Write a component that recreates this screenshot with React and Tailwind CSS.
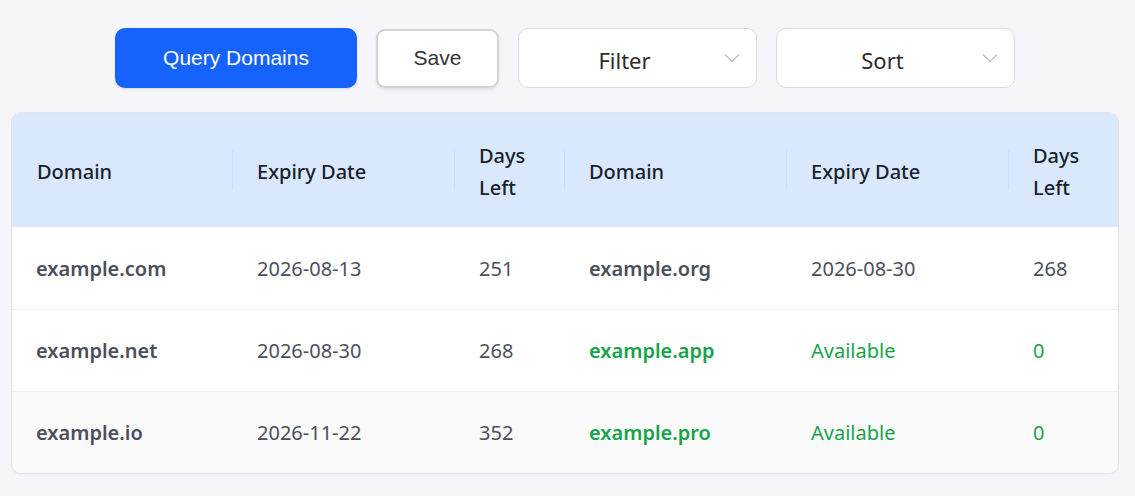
import React from 'react';

const rows = [
  { d1: 'example.com', e1: '2026-08-13', n1: '251', d2: 'example.org', e2: '2026-08-30', n2: '268', ok2: false },
  { d1: 'example.net', e1: '2026-08-30', n1: '268', d2: 'example.app', e2: 'Available', n2: '0', ok2: true },
  { d1: 'example.io', e1: '2026-11-22', n1: '352', d2: 'example.pro', e2: 'Available', n2: '0', ok2: true },
];

const Chevron = () => (
  <svg width="16" height="10" viewBox="0 0 16 10" fill="none" className="absolute right-[16px] top-[24px]">
    <path d="M1 1.5l7 7 7-7" stroke="#b8b8bd" strokeWidth="1.1" />
  </svg>
);

const HeadCell = ({ children, sep = true, w }) => (
  <th className={`relative ${w} text-left font-medium px-[25px] pt-[27px] pb-[23px] leading-[32px]`}>
    {sep && <span className="absolute left-0 top-[37px] h-[40px] w-px bg-[#cfdff5]" />}
    {children}
  </th>
);

export default function App() {
  return (
    <div className="min-h-screen w-full bg-[#f6f5f9] pt-[28px]" style={{ fontFamily: '"Noto Sans", sans-serif' }}>
      <div className="flex items-center gap-[19px] pl-[115px]" style={{ fontFamily: '"Liberation Sans", Arial, sans-serif' }}>
        <button className="w-[242px] h-[60px] rounded-[10px] bg-[#1662fd] text-white text-[21px] shadow-sm">
          Query Domains
        </button>
        <button className="w-[123px] h-[59px] rounded-[9px] bg-white border-2 border-[#d4d4d8] text-[#333] text-[21px] shadow-[0_2px_3px_rgba(0,0,0,0.08)]">
          Save
        </button>
        <div className="relative w-[239px] h-[60px] rounded-[10px] bg-white border border-[#dcdce0] flex items-center justify-center pr-[26px] pt-[4px] text-[22px] text-[#2b2b2b]" style={{ fontFamily: '"Noto Sans", sans-serif' }}>
          Filter
          <Chevron />
        </div>
        <div className="relative w-[239px] h-[60px] rounded-[10px] bg-white border border-[#dcdce0] flex items-center justify-center pr-[26px] pt-[4px] text-[22px] text-[#2b2b2b]" style={{ fontFamily: '"Noto Sans", sans-serif' }}>
          Sort
          <Chevron />
        </div>
      </div>

      <div className="mx-[11px] mt-[24px] w-[1108px] rounded-[10px] border border-[#e3e3e7] bg-white overflow-hidden shadow-[0_1px_2px_rgba(0,0,0,0.04)]">
        <table className="w-full border-collapse table-fixed text-[20px]">
          <thead>
            <tr className="bg-[#d9e8fd] text-[#1a1f2b] h-[114px]">
              <HeadCell sep={false} w="w-[220px]">Domain</HeadCell>
              <HeadCell w="w-[222px]">Expiry Date</HeadCell>
              <HeadCell w="w-[110px]">Days Left</HeadCell>
              <HeadCell w="w-[222px]">Domain</HeadCell>
              <HeadCell w="w-[222px]">Expiry Date</HeadCell>
              <HeadCell w="w-[112px]">Days Left</HeadCell>
            </tr>
          </thead>
          <tbody>
            {rows.map((r, i) => (
              <tr key={i} className={`h-[82px] ${i > 0 ? 'border-t border-[#efeff1]' : ''} ${i === 2 ? 'bg-[#fafafa]' : 'bg-white'}`}>
                <td className="pl-[24px] pt-[2px] font-semibold text-[#4b4f5c]">{r.d1}</td>
                <td className="pl-[25px] pt-[2px] text-[#4b4f5c]">{r.e1}</td>
                <td className="pl-[25px] pt-[2px] text-[#4b4f5c]">{r.n1}</td>
                <td className={`pl-[25px] pt-[2px] font-semibold ${r.ok2 ? 'text-[#16a34a]' : 'text-[#4b4f5c]'}`}>{r.d2}</td>
                <td className={`pl-[25px] pt-[2px] ${r.ok2 ? 'text-[#16a34a]' : 'text-[#4b4f5c]'}`}>{r.e2}</td>
                <td className={`pl-[25px] pt-[2px] ${r.ok2 ? 'text-[#16a34a]' : 'text-[#4b4f5c]'}`}>{r.n2}</td>
              </tr>
            ))}
          </tbody>
        </table>
      </div>
    </div>
  );
}
